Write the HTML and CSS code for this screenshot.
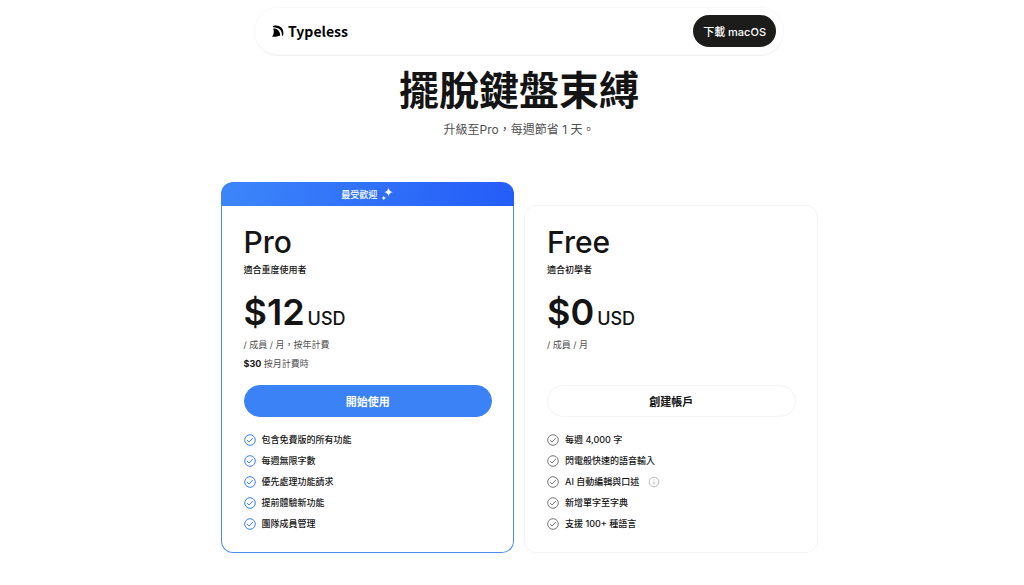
FILE: index.html
```html
<!DOCTYPE html>
<html lang="zh-Hant">
<head>
<meta charset="utf-8">
<meta name="viewport" content="width=device-width, initial-scale=1">
<title>Typeless</title>
<link rel="stylesheet" href="styles.css">
</head>
<body>
<svg class="defs" aria-hidden="true">
  <symbol id="check" viewBox="0 0 12 12">
    <circle cx="6" cy="6" r="5.3" fill="none" stroke="currentColor" stroke-width="1"/>
    <path d="M3.4 6.4 5.1 8 8.6 4.2" fill="none" stroke="currentColor" stroke-width="1" stroke-linecap="round" stroke-linejoin="round"/>
  </symbol>
</svg>
<div class="page">
  <header class="nav">
    <a class="brand" href="#">
      <svg class="brand-mark" viewBox="0 0 12 12" aria-hidden="true">
        <path d="M1 .9C7.500-1 12.800 3.500 11.100 10.300L9.900 11.200C10.400 6.200 7.800 2.400 1 2.300Z"/>
        <path d="M1.200 3.700C2.600 3.400 4 3.600 5 4.300 7 5.800 8.400 8 8.200 10.600 6 11.700 3 11.900 0 11.800 1.800 9.500 2.400 6.500 1.200 3.700Z"/>
      </svg>
      <span>Typeless</span>
    </a>
    <button class="download" type="button">下載 macOS</button>
  </header>
  <main>
    <h1 class="headline">擺脫鍵盤束縛</h1>
    <p class="lead">升級至Pro，每週節省 1 天。</p>
    <div class="plans">
      <section class="plan plan-pro">
        <div class="ribbon">
          <span>最受歡迎</span>
          <svg class="sparkle" viewBox="0 0 12 14" aria-hidden="true">
            <path d="M7.500 .4Q8 4.600 12 5 8 5.500 7.500 9.600 7 5.500 3 5 7 4.600 7.500 .4Z"/>
            <path d="M2.800 8.700Q3.100 10.700 5 11 3.100 11.300 2.800 13.200 2.500 11.300 .6 11 2.500 10.700 2.800 8.700Z"/>
          </svg>
        </div>
        <div class="body">
          <h2 class="name">Pro</h2>
          <p class="audience">適合重度使用者</p>
          <p class="price"><strong class="amount">$12</strong><span class="currency">USD</span></p>
          <div class="terms">
            <p>/ 成員 / 月，按年計費</p>
            <p><b class="monthly">$30</b> 按月計費時</p>
          </div>
          <button class="action action-primary" type="button">開始使用</button>
          <ul class="features">
            <li><svg class="tick"><use href="#check"/></svg>包含免費版的所有功能</li>
            <li><svg class="tick"><use href="#check"/></svg>每週無限字數</li>
            <li><svg class="tick"><use href="#check"/></svg>優先處理功能請求</li>
            <li><svg class="tick"><use href="#check"/></svg>提前體驗新功能</li>
            <li><svg class="tick"><use href="#check"/></svg>團隊成員管理</li>
          </ul>
        </div>
      </section>
      <section class="plan plan-free">
        <div class="body">
          <h2 class="name">Free</h2>
          <p class="audience">適合初學者</p>
          <p class="price"><strong class="amount">$0</strong><span class="currency">USD</span></p>
          <div class="terms">
            <p>/ 成員 / 月</p>
          </div>
          <button class="action" type="button">創建帳戶</button>
          <ul class="features">
            <li><svg class="tick"><use href="#check"/></svg>每週 4,000 字</li>
            <li><svg class="tick"><use href="#check"/></svg>閃電般快速的語音輸入</li>
            <li><svg class="tick"><use href="#check"/></svg>AI 自動編輯與口述
              <svg class="info" viewBox="0 0 12 12" aria-hidden="true"><circle cx="6" cy="6" r="4.800" fill="none" stroke="currentColor" stroke-width=".8"/><path d="M6 5.500V8.300M6 3.500V4.300" stroke="currentColor" stroke-width=".9"/></svg></li>
            <li><svg class="tick"><use href="#check"/></svg>新增單字至字典</li>
            <li><svg class="tick"><use href="#check"/></svg>支援 100+ 種語言</li>
          </ul>
        </div>
      </section>
    </div>
  </main>
</div>
</body>
</html>
```
FILE: styles.css
```css
* {
  box-sizing: border-box;
}

body {
  margin: 0;
  background: #fff;
  color: #141414;
  font-family: Inter, "Noto Sans CJK TC", sans-serif;
}

h1, h2, p, ul {
  margin: 0;
  padding: 0;
}

button {
  font-family: inherit;
  cursor: pointer;
}

.defs {
  display: none;
}

.page {
  padding: 7px 0 32px 14px;
}

.nav {
  display: flex;
  align-items: center;
  justify-content: space-between;
  max-width: 530px;
  margin: 0 auto;
  padding: 7px 7px 7px 17px;
  border: 1px solid #f9f9f9;
  border-radius: 24px;
  box-shadow: 0 1px 1px rgba(0, 0, 0, 0.06);
}

.brand {
  display: flex;
  align-items: center;
  gap: 4px;
  color: #000;
  font: 700 14px/20px "Noto Sans CJK TC", sans-serif;
  text-decoration: none;
}

.brand-mark {
  width: 12px;
  height: 12px;
}

.download {
  height: 32px;
  padding: 0 10px;
  border: 0;
  border-radius: 16px;
  background: #1c1c1a;
  color: #fff;
  font-size: 11px;
  font-weight: 500;
}

.headline {
  margin-top: 12px;
  font-size: 40px;
  line-height: 48px;
  font-weight: 600;
  text-align: center;
}

.lead {
  margin-top: 6px;
  color: #505050;
  font-size: 12px;
  line-height: 18px;
  text-align: center;
}

.plans {
  display: flex;
  align-items: flex-end;
  gap: 10px;
  max-width: 597px;
  margin: 43px auto 0;
}

.plan {
  flex: 1;
}

.ribbon {
  display: flex;
  align-items: center;
  justify-content: center;
  gap: 4px;
  height: 24px;
  border-radius: 12px 12px 0 0;
  background: linear-gradient(100deg, #3c86fa, #245cf8);
  color: #fff;
  font-size: 9px;
  font-weight: 500;
}

.sparkle {
  width: 12px;
  height: 14px;
  fill: #fff;
}

.body {
  padding: 17px 21px 18px 22px;
  border: 1px solid #f4f4f4;
  border-radius: 12px;
}

.plan-pro .body {
  border-color: #4b8cf7;
  border-top: 0;
  border-radius: 0 0 12px 12px;
}

.name {
  font-size: 30px;
  line-height: 38px;
  font-weight: 500;
}

.audience {
  margin-top: 1px;
  font-size: 9px;
  line-height: 16px;
  font-weight: 500;
}

.price {
  display: flex;
  align-items: baseline;
  gap: 3px;
  margin-top: 12px;
}

.amount {
  font-size: 36px;
  line-height: 44px;
  font-weight: 600;
}

.currency {
  font-size: 18px;
  line-height: 22px;
  font-weight: 500;
}

.terms {
  min-height: 38px;
  margin-top: 1px;
  color: #505050;
  font-size: 9px;
  line-height: 19px;
}

.monthly {
  color: #141414;
}

.action {
  display: block;
  width: 100%;
  height: 32px;
  margin-top: 12px;
  border: 1px solid #f4f4f4;
  border-radius: 16px;
  background: #fff;
  color: #141414;
  font-size: 11px;
  font-weight: 600;
}

.action-primary {
  border-color: #3b82f6;
  background: #3b82f6;
  color: #fff;
}

.features {
  margin-top: 12px;
  list-style: none;
  font-size: 9px;
  line-height: 21px;
  font-weight: 500;
}

.features li {
  display: flex;
  align-items: center;
  gap: 6px;
}

.tick {
  width: 12px;
  height: 12px;
  color: #777;
}

.plan-pro .tick {
  color: #3b82f6;
}

.info {
  width: 12px;
  height: 12px;
  margin-left: 3px;
  color: #aaa;
}
```
